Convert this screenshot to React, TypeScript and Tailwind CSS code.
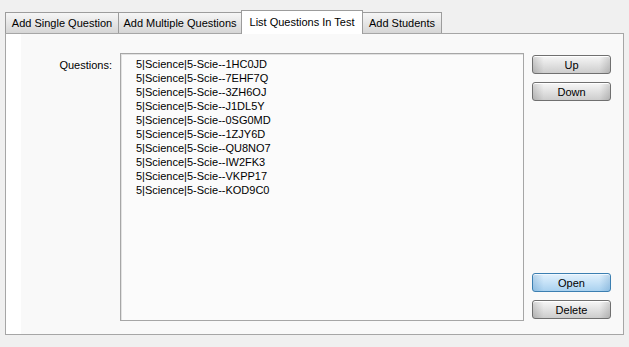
const questions = [
  '5|Science|5-Scie--1HC0JD',
  '5|Science|5-Scie--7EHF7Q',
  '5|Science|5-Scie--3ZH6OJ',
  '5|Science|5-Scie--J1DL5Y',
  '5|Science|5-Scie--0SG0MD',
  '5|Science|5-Scie--1ZJY6D',
  '5|Science|5-Scie--QU8NO7',
  '5|Science|5-Scie--IW2FK3',
  '5|Science|5-Scie--VKPP17',
  '5|Science|5-Scie--KOD9C0',
]

function Tab({ label, active, w }: { label: string; active?: boolean; w: string }) {
  if (active) {
    return (
      <div
        className={`${w} h-[24px] -mb-px relative z-10 flex items-center justify-center bg-white border border-b-0 border-[#9c9c9c] text-black`}
      >
        <span className="-mt-[1px]">{label}</span>
      </div>
    )
  }
  return (
    <div
      className={`${w} h-[21px] -mr-px flex items-center justify-center border border-b-0 border-[#9c9c9c] bg-[linear-gradient(#f6f6f6,#e6e6e6_50%,#d6d6d6)] text-black`}
    >
      {label}
    </div>
  )
}

function Btn({ label, primary }: { label: string; primary?: boolean }) {
  return (
    <button
      className={
        primary
          ? 'w-[79px] h-[19px] rounded-[3px] border border-[#3c7fb1] bg-[linear-gradient(90deg,rgba(40,110,170,.22),transparent_14%,transparent_86%,rgba(40,110,170,.22)),linear-gradient(#e3f1fc,#c6e2f7_50%,#a9d1ef)] text-black leading-none shadow-[inset_0_1px_0_#f0f8ff]'
          : 'w-[79px] h-[19px] rounded-[3px] border border-[#707070] bg-[linear-gradient(90deg,rgba(0,0,0,.14),transparent_14%,transparent_86%,rgba(0,0,0,.14)),linear-gradient(#f7f7f7,#e2e2e2_50%,#cdcdcd)] text-black leading-none shadow-[inset_0_1px_0_#ffffff]'
      }
    >
      <span className="block pt-[1px]">{label}</span>
    </button>
  )
}

export default function App() {
  return (
    <div className="w-[629px] h-[347px] bg-[#f0f0f0] text-[11px] font-['Liberation_Sans',Arial,sans-serif] overflow-hidden">
      <div className="flex items-end pl-[5px] pt-[10px]">
        <Tab label="Add Single Question" w="w-[114px]" />
        <Tab label="Add Multiple Questions" w="w-[124px]" />
        <Tab label="List Questions In Test" active w="w-[122px]" />
        <div className="-ml-px">
          <Tab label="Add Students" w="w-[80px]" />
        </div>
      </div>
      <div className="ml-[5px] w-[619px] h-[302px] border border-[#a6a6a6] flex bg-[#f9f9f9]">
        <div className="w-[15px] bg-white" />
        <div className="flex-1 flex pt-[19px]">
          <div className="w-[91px] text-right pt-[4px] text-black">Questions:</div>
          <div className="ml-[8px] w-[404px] h-[268px] border border-[#a6a6a6] bg-[#fbfbfb] shadow-[inset_1px_1px_0_#e2e2e2] pt-[3px] pl-[15px]">
            {questions.map((q) => (
              <div key={q} className="h-[14px] leading-[14px] text-black">
                {q}
              </div>
            ))}
          </div>
          <div className="ml-[8px] flex flex-col justify-between pt-[2px] h-[266px]">
            <div className="flex flex-col gap-[8px]">
              <Btn label="Up" />
              <Btn label="Down" />
            </div>
            <div className="flex flex-col gap-[8px]">
              <Btn label="Open" primary />
              <Btn label="Delete" />
            </div>
          </div>
        </div>
      </div>
    </div>
  )
}
